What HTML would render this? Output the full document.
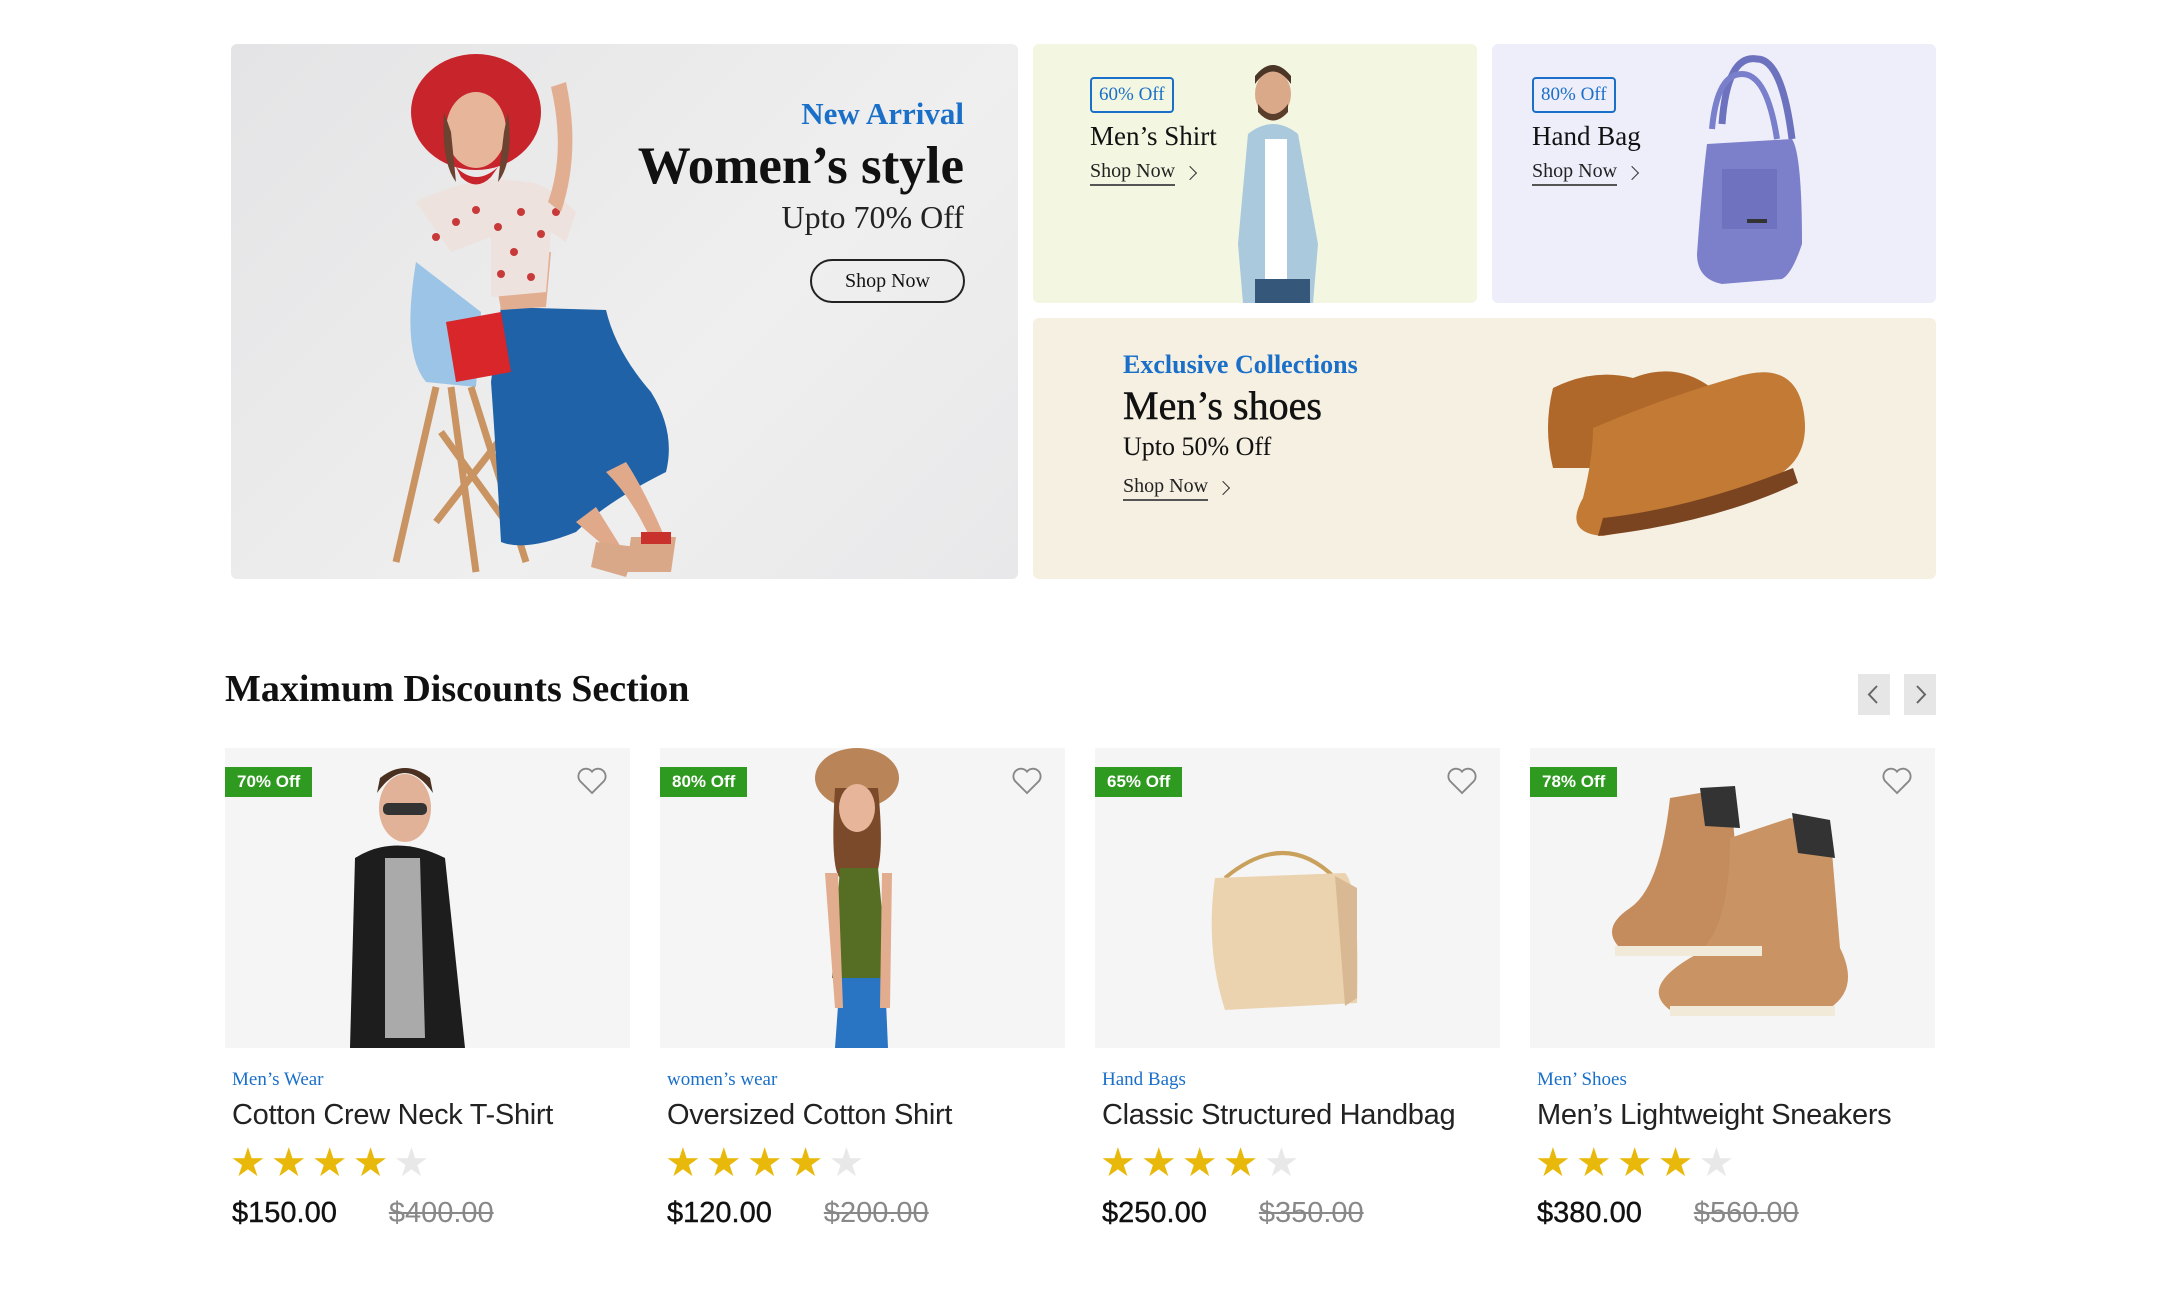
<!DOCTYPE html>
<html><head><meta charset="utf-8">
<style>
*{margin:0;padding:0;box-sizing:border-box}
body{width:2160px;height:1300px;background:#fff;position:relative;overflow:hidden;font-family:"Liberation Sans",sans-serif;color:#111}
.abs{position:absolute}
.serif{font-family:"Liberation Serif",serif}
.panel{position:absolute;border-radius:6px;overflow:hidden}
.shop{position:absolute;font-family:"Liberation Serif",serif;font-size:20px;color:#222;border-bottom:2px solid #555;padding-bottom:1px;white-space:nowrap}
.shop:after{content:"";position:absolute;right:-20px;top:8px;width:9px;height:9px;border-right:1.6px solid #333;border-top:1.6px solid #333;transform:rotate(45deg)}
.obadge{position:absolute;border:2px solid #1a6fc9;color:#1a6fc9;border-radius:4px;font-family:"Liberation Serif",serif;font-size:19px;padding:5px 7px;line-height:22px}
.card{position:absolute;top:748px;width:405px}
.img{height:300px;background:#f5f5f5;position:relative;overflow:hidden}
.badge{position:absolute;left:0;top:19px;background:#2f9a20;color:#fff;font-size:17px;font-weight:bold;padding:0 12px;height:30px;line-height:30px}
.heart{position:absolute;right:22px;top:18px}
.cat{font-family:"Liberation Serif",serif;color:#1a6fc9;font-size:19px;margin:21px 0 0 7px}
.name{font-size:29px;color:#222;margin:8px 0 0 7px;letter-spacing:-0.3px}
.stars{margin:10px 0 0 5px;font-size:40px;letter-spacing:5px;color:#e8b80a;line-height:42px}
.stars span{color:#e8e8e8}
.price{margin:13px 0 0 7px;font-size:29px;white-space:nowrap;-webkit-text-stroke:0.4px #111}
.price s{color:#888;margin-left:52px;-webkit-text-stroke:0}
</style></head><body>

<!-- main banner -->
<div class="panel" style="left:231px;top:44px;width:787px;height:535px;background:linear-gradient(135deg,#e4e4e6,#efefef 60%,#e8e8ea)">
<svg width="787" height="535" class="abs" style="left:0;top:0"><g transform="translate(45,8)">
 <path d="M140 210 Q125 300 150 330 L200 335 L205 260 Z" fill="#9cc4e6"/>
 <path d="M160 335 L120 510 M175 335 L200 520 M195 335 L250 510 M165 380 L230 470 M230 380 L160 470" stroke="#c99462" stroke-width="7" fill="none"/>
 <path d="M225 255 L330 258 Q340 300 375 340 Q400 380 390 420 Q330 450 300 480 Q250 500 225 490 Q220 400 215 330 Z" fill="#1f62a8"/>
 <path d="M330 420 Q360 450 380 500 L395 500 Q370 440 350 410 Z M300 470 L335 500 L345 495 L320 455Z" fill="#e0a98a"/>
 <path d="M355 485 L400 485 L395 520 L350 520 Z M320 490 L360 495 L350 525 L315 515Z" fill="#d8a888"/>
 <rect x="365" y="480" width="30" height="12" fill="#c9312c"/>
 <path d="M170 270 L225 260 L235 320 L180 330 Z" fill="#d8262a"/>
 <path d="M215 200 L275 200 L270 255 L225 258 Z" fill="#e2ae92"/>
 <path d="M140 150 Q200 120 250 130 Q270 130 300 160 L290 190 L275 180 L270 240 L215 245 L215 185 L175 200 Z" fill="#ede2de"/>
 <g fill="#c83a3a"><circle cx="180" cy="170" r="4"/><circle cx="200" cy="158" r="4"/><circle cx="222" cy="175" r="4"/><circle cx="245" cy="160" r="4"/><circle cx="265" cy="182" r="4"/><circle cx="238" cy="200" r="4"/><circle cx="225" cy="222" r="4"/><circle cx="255" cy="225" r="4"/><circle cx="160" cy="185" r="4"/><circle cx="280" cy="160" r="4"/></g>
 <path d="M285 160 Q305 100 290 30 L275 35 Q290 100 272 150 Z" fill="#e2ae92"/>
 <ellipse cx="200" cy="60" rx="65" ry="58" fill="#c8242b"/>
 <ellipse cx="200" cy="78" rx="30" ry="38" fill="#e6b59a"/>
 <path d="M168 60 Q165 110 180 130 L175 80Z M232 60 Q238 110 222 130 L228 80Z" fill="#6b4330"/>
 <path d="M180 115 Q200 135 222 115 L215 125 Q200 140 185 125Z" fill="#c8242b"/>
</g></svg>
<div class="abs serif" style="right:54px;top:52px;font-size:31px;font-weight:bold;color:#1a6fc9">New Arrival</div>
<div class="abs serif" style="right:54px;top:92px;font-size:53px;font-weight:bold;color:#111">Women’s style</div>
<div class="abs serif" style="right:54px;top:155px;font-size:32px;color:#222">Upto 70% Off</div>
<div class="abs serif" style="left:579px;top:215px;width:155px;height:44px;border:2px solid #222;border-radius:22px;font-size:20px;text-align:center;line-height:40px">Shop Now</div>
</div>

<!-- mens shirt -->
<div class="panel" style="left:1033px;top:44px;width:444px;height:259px;background:#f3f6e0">
<svg width="444" height="259" class="abs" style="left:0;top:0">
 <path d="M215 90 Q240 70 265 90 L285 200 L280 259 L210 259 L205 200 Z" fill="#aac9dc"/>
 <rect x="232" y="95" width="22" height="150" fill="#fff"/>
 <rect x="222" y="235" width="55" height="24" fill="#35587a"/>
 <ellipse cx="240" cy="50" rx="18" ry="23" fill="#d9a989"/>
 <path d="M222 40 Q240 15 258 40 L258 32 Q240 10 222 32Z" fill="#4b3526"/>
 <path d="M225 60 Q240 80 255 60 L255 68 Q240 85 225 68Z" fill="#5a3d2a"/>
</svg>
<div class="obadge" style="left:57px;top:33px">60% Off</div>
<div class="abs serif" style="left:57px;top:77px;font-size:27px">Men’s Shirt</div>
<div class="shop" style="left:57px;top:116px">Shop Now</div>
</div>

<!-- hand bag -->
<div class="panel" style="left:1492px;top:44px;width:444px;height:259px;background:#eeeefb">
<svg width="444" height="259" class="abs" style="left:0;top:0">
 <path d="M230 80 Q235 10 265 15 Q290 15 300 95" stroke="#6d72bf" stroke-width="7" fill="none"/>
 <path d="M220 85 Q225 30 250 30 Q275 30 285 95" stroke="#7a7fcc" stroke-width="6" fill="none"/>
 <path d="M215 100 L300 95 Q310 110 310 200 Q300 230 290 235 L230 240 Q205 235 205 210 Q210 140 215 100Z" fill="#7c80cb"/>
 <rect x="230" y="125" width="55" height="60" fill="#6f73bf"/>
 <rect x="255" y="175" width="20" height="4" fill="#333"/>
</svg>
<div class="obadge" style="left:40px;top:33px">80% Off</div>
<div class="abs serif" style="left:40px;top:77px;font-size:27px">Hand Bag</div>
<div class="shop" style="left:40px;top:116px">Shop Now</div>
</div>

<!-- shoes -->
<div class="panel" style="left:1033px;top:318px;width:903px;height:261px;background:#f6f0e2">
<svg width="903" height="261" class="abs" style="left:0;top:0">
 <path d="M520 70 Q560 50 600 60 Q650 40 690 80 Q720 90 700 140 L600 150 L520 150 Q510 110 520 70Z" fill="#b0682a"/>
 <path d="M560 110 Q630 80 700 60 Q760 40 770 90 Q780 140 740 160 Q670 200 570 218 Q530 215 550 180 Q560 140 560 110Z" fill="#c27a35"/>
 <path d="M570 200 Q660 190 760 150 L765 165 Q680 205 565 218Z" fill="#7a4420"/>
</svg>
<div class="abs serif" style="left:90px;top:32px;font-size:26px;font-weight:bold;color:#1a6fc9">Exclusive Collections</div>
<div class="abs serif" style="left:90px;top:64px;font-size:40px;color:#111;-webkit-text-stroke:0.5px #111">Men’s shoes</div>
<div class="abs serif" style="left:90px;top:114px;font-size:26px">Upto 50% Off</div>
<div class="shop" style="left:90px;top:157px">Shop Now</div>
</div>

<!-- section header -->
<div class="abs serif" style="left:225px;top:667px;font-size:38px;font-weight:bold;color:#111">Maximum Discounts Section</div>
<div class="abs" style="left:1858px;top:674px;width:32px;height:41px;background:#e6e6e6"><svg width="32" height="41"><path d="M19 12 L11 20.5 L19 29" stroke="#666" stroke-width="2" fill="none"/></svg></div>
<div class="abs" style="left:1904px;top:674px;width:32px;height:41px;background:#e6e6e6"><svg width="32" height="41"><path d="M13 12 L21 20.5 L13 29" stroke="#666" stroke-width="2" fill="none"/></svg></div>

<!-- cards -->
<div class="card" style="left:225px">
 <div class="img">
  <svg width="405" height="300" class="abs"><path d="M130 110 Q170 85 220 110 L240 300 L125 300Z" fill="#1d1d1d"/><path d="M160 110 L195 110 L200 290 L160 290Z" fill="#aaa"/><ellipse cx="180" cy="60" rx="26" ry="34" fill="#e2b298"/><path d="M152 45 Q180 5 208 45 L205 30 Q180 10 155 30Z" fill="#4a3020"/><rect x="158" y="55" width="44" height="12" rx="5" fill="#333"/></svg>
  <div class="badge">70% Off</div>
  <svg class="heart" width="32" height="30" viewBox="0 0 24 22"><path d="M12 20 L3 11 A5 5 0 0 1 12 4 A5 5 0 0 1 21 11Z" fill="none" stroke="#888" stroke-width="1.4"/></svg>
 </div>
 <div class="cat">Men’s Wear</div><div class="name">Cotton Crew Neck T-Shirt</div>
 <div class="stars">★★★★<span>★</span></div>
 <div class="price">$150.00<s>$400.00</s></div>
</div>

<div class="card" style="left:660px">
 <div class="img">
  <svg width="405" height="300" class="abs"><ellipse cx="197" cy="30" rx="42" ry="30" fill="#b98558"/><path d="M175 40 Q170 120 180 130 L215 130 Q225 110 218 40Z" fill="#7a4a2a"/><ellipse cx="197" cy="60" rx="18" ry="24" fill="#e6b59a"/><path d="M180 120 L218 120 L228 230 L172 230Z" fill="#566e23"/><path d="M180 230 L225 230 L228 300 L175 300Z" fill="#2a74c4"/><path d="M165 125 L175 260 L183 260 L178 125Z M222 125 L220 260 L230 260 L232 125Z" fill="#e2ad8f"/></svg>
  <div class="badge">80% Off</div>
  <svg class="heart" width="32" height="30" viewBox="0 0 24 22"><path d="M12 20 L3 11 A5 5 0 0 1 12 4 A5 5 0 0 1 21 11Z" fill="none" stroke="#888" stroke-width="1.4"/></svg>
 </div>
 <div class="cat">women’s wear</div><div class="name">Oversized Cotton Shirt</div>
 <div class="stars">★★★★<span>★</span></div>
 <div class="price">$120.00<s>$200.00</s></div>
</div>

<div class="card" style="left:1095px">
 <div class="img">
  <svg width="405" height="300" class="abs"><path d="M130 130 Q190 80 240 130" stroke="#c9a15c" stroke-width="4" fill="none"/><path d="M120 130 L250 125 Q265 140 262 255 L130 262 Q110 200 120 130Z" fill="#ecd3b0"/><path d="M240 128 L262 140 L262 250 L250 258Z" fill="#d9b993"/></svg>
  <div class="badge">65% Off</div>
  <svg class="heart" width="32" height="30" viewBox="0 0 24 22"><path d="M12 20 L3 11 A5 5 0 0 1 12 4 A5 5 0 0 1 21 11Z" fill="none" stroke="#888" stroke-width="1.4"/></svg>
 </div>
 <div class="cat">Hand Bags</div><div class="name">Classic Structured Handbag</div>
 <div class="stars">★★★★<span>★</span></div>
 <div class="price">$250.00<s>$350.00</s></div>
</div>

<div class="card" style="left:1530px">
 <div class="img">
  <svg width="405" height="300" class="abs"><path d="M140 50 L200 40 L210 150 Q250 170 230 200 L90 200 Q70 180 100 160 Q130 140 140 50Z" fill="#c48c5c"/><path d="M200 90 L260 70 L300 80 L310 200 Q330 240 300 260 L140 262 Q110 240 160 210 Q200 190 200 90Z" fill="#c99363"/><path d="M262 65 L300 72 L305 110 L268 105Z M170 40 L205 38 L210 80 L175 78Z" fill="#333"/><path d="M140 258 L305 258 L305 268 L140 268Z M85 198 L232 198 L232 208 L85 208Z" fill="#f2ead8"/></svg>
  <div class="badge">78% Off</div>
  <svg class="heart" width="32" height="30" viewBox="0 0 24 22"><path d="M12 20 L3 11 A5 5 0 0 1 12 4 A5 5 0 0 1 21 11Z" fill="none" stroke="#888" stroke-width="1.4"/></svg>
 </div>
 <div class="cat">Men’ Shoes</div><div class="name">Men’s Lightweight Sneakers</div>
 <div class="stars">★★★★<span>★</span></div>
 <div class="price">$380.00<s>$560.00</s></div>
</div>

</body></html>
